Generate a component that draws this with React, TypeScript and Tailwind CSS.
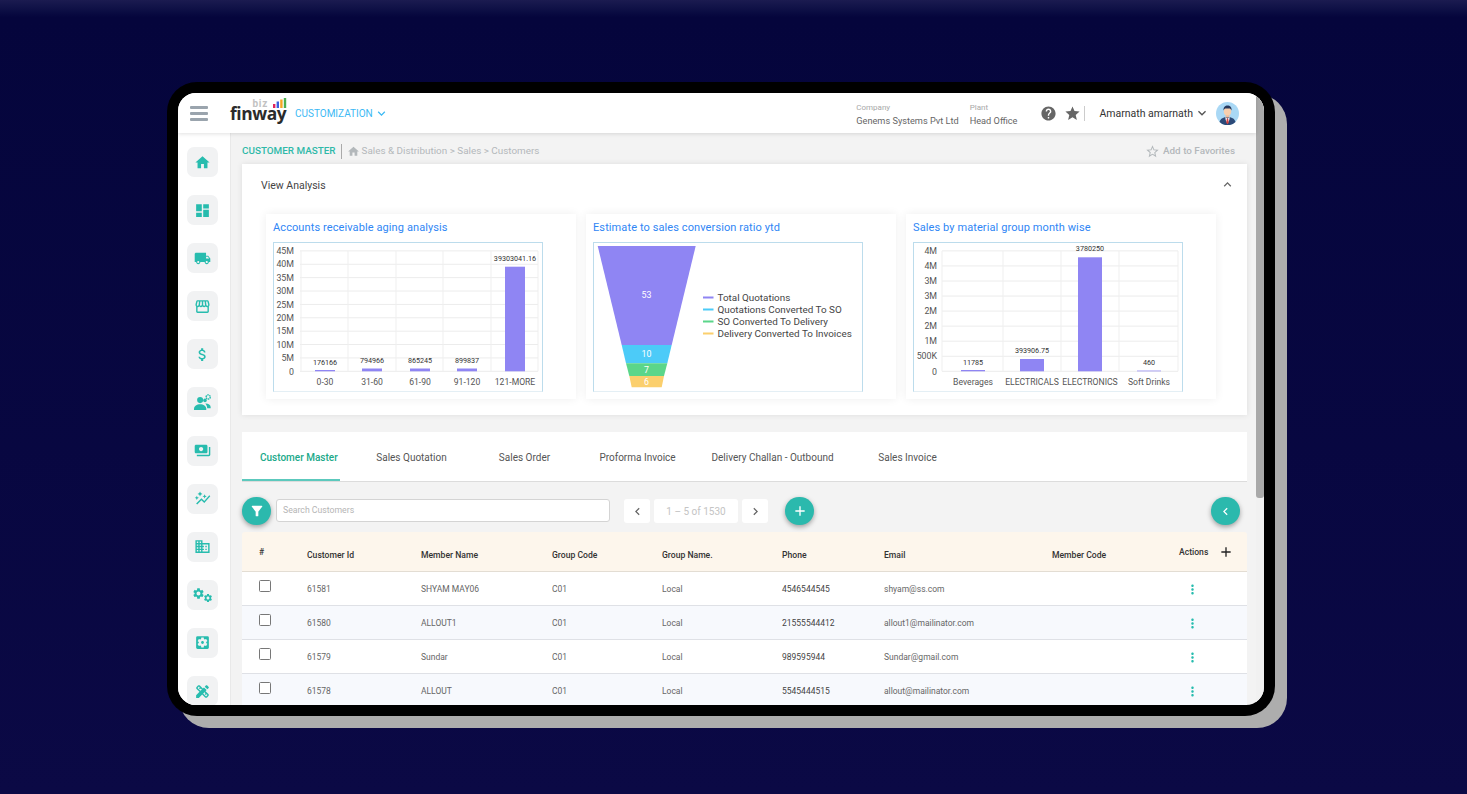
import type { ReactNode } from "react";
import {
  MdHome,
  MdDashboard,
  MdLocalShipping,
  MdStorefront,
  MdAttachMoney,
  MdPayments,
  MdAutoGraph,
  MdDomain,
  MdSettings,
  MdSettingsApplications,
  MdDesignServices,
  MdHelp,
  MdStar,
  MdStarBorder,
  MdKeyboardArrowDown,
  MdKeyboardArrowUp,
  MdChevronLeft,
  MdChevronRight,
  MdFilterAlt,
  MdAdd,
  MdMoreVert,
} from "react-icons/md";

function PeopleGearIcon() {
  return (
    <svg width="19" height="18" viewBox="0 0 20 19" fill="currentColor" className="block">
      <circle cx="7.5" cy="7.5" r="3.2" />
      <path d="M1 17c0-3.2 3-5 6.5-5s6.5 1.8 6.5 5v1H1z" />
      <circle cx="12.6" cy="7.8" r="1.9" />
      <path d="M13 11.2c2.8-.2 5.6 1.2 5.6 3.6V16H15c-.2-1.9-1-3.6-2-4.8z" />
      <circle cx="16" cy="4.2" r="2.2" fill="none" stroke="currentColor" strokeWidth="1.5" strokeDasharray="1.5 0.6" />
    </svg>
  );
}

function GearsIcon() {
  return (
    <div className="flex">
      <MdSettings className="text-[13px]" />
      <MdSettings className="mt-[6px] -ml-[2px] text-[10px]" />
    </div>
  );
}

const iconClass = "text-[17px]";

const NAV_ITEMS: ReactNode[] = [
  <MdHome className={iconClass} />,
  <MdDashboard className={iconClass} />,
  <MdLocalShipping className={iconClass} />,
  <MdStorefront className={iconClass} />,
  <MdAttachMoney className={iconClass} />,
  <PeopleGearIcon />,
  <MdPayments className={iconClass} />,
  <MdAutoGraph className={iconClass} />,
  <MdDomain className={iconClass} />,
  <GearsIcon />,
  <MdSettingsApplications className={iconClass} />,
  <MdDesignServices className={iconClass} />,
];

const TABLE_COLS =
  "grid grid-cols-[65px_114px_131px_110px_120px_102px_168px_127px_1fr] items-center";

const ROWS = [
  { id: "61581", name: "SHYAM MAY06", phone: "4546544545", email: "shyam@ss.com" },
  { id: "61580", name: "ALLOUT1", phone: "21555544412", email: "allout1@mailinator.com" },
  { id: "61579", name: "Sundar", phone: "989595944", email: "Sundar@gmail.com" },
  { id: "61578", name: "ALLOUT", phone: "5545444515", email: "allout@mailinator.com" },
];

type Bar = { x: number; w: number; top: number; value: string; labelY: number; name: string };

function ChartBox({ x, children }: { x: number; children: ReactNode }) {
  return (
    <div className="h-[150px] w-[270px] border border-[#bcdcec] border-b-[#e4eff5]">
      <svg
        width={268}
        height={148}
        viewBox={`${x + 1} 243 268 148`}
        className="block font-[Roboto,sans-serif]"
      >
        {children}
      </svg>
    </div>
  );
}

function BarChart(props: {
  boxX: number;
  labelX: number;
  gridL: number;
  gridR: number;
  ticks: string[];
  vLines: number[];
  bars: Bar[];
}) {
  const { boxX, labelX, gridL, gridR, ticks, vLines, bars } = props;
  const y0 = 371.3;
  const yTop = 250.9;
  const step = (y0 - yTop) / (ticks.length - 1);
  return (
    <ChartBox x={boxX}>
      {ticks.map((t, i) => {
        const y = yTop + step * i;
        return (
          <g key={i}>
            <line x1={gridL} x2={gridR} y1={y} y2={y} stroke="#ececec" strokeWidth={1} />
            <text x={labelX} y={y + 3.2} textAnchor="end" fontSize={8.8} fill="#555">
              {t}
            </text>
          </g>
        );
      })}
      {vLines.map((x) => (
        <line key={x} x1={x} x2={x} y1={yTop} y2={y0} stroke="#efefef" strokeWidth={1} />
      ))}
      {bars.map((b) => (
        <g key={b.name}>
          <rect x={b.x} y={b.top} width={b.w} height={y0 - b.top} fill="#8f85f3" />
          <text x={b.x + b.w / 2} y={b.labelY} textAnchor="middle" fontSize={7.2} fill="#333">
            {b.value}
          </text>
          <text x={b.x + b.w / 2} y={385} textAnchor="middle" fontSize={8.6} fill="#555">
            {b.name}
          </text>
        </g>
      ))}
    </ChartBox>
  );
}

function FunnelChart() {
  const slices = [
    { pts: "597.7,246 695.7,246 671.7,345 621.7,345", fill: "#8f85f3", label: "53", y: 298 },
    { pts: "621.7,345 671.7,345 667.3,363.3 626,363.3", fill: "#4ccbf8", label: "10", y: 357 },
    { pts: "626,363.3 667.3,363.3 664,376 629.3,376", fill: "#5bd68a", label: "7", y: 373 },
    { pts: "629.3,376 664,376 661.7,387.3 631.7,387.3", fill: "#fbcf6d", label: "6", y: 385 },
  ];
  const legend = [
    { text: "Total Quotations", color: "#8f85f3" },
    { text: "Quotations Converted To SO", color: "#4ccbf8" },
    { text: "SO Converted To Delivery", color: "#5bd68a" },
    { text: "Delivery Converted To Invoices", color: "#fbcf6d" },
  ];
  return (
    <ChartBox x={593}>
      {slices.map((s) => (
        <g key={s.label}>
          <polygon points={s.pts} fill={s.fill} />
          <text x={646.5} y={s.y} textAnchor="middle" fontSize={8.8} fill="#fff">
            {s.label}
          </text>
        </g>
      ))}
      {legend.map((l, i) => (
        <g key={l.text}>
          <rect x={703} y={296.5 + i * 12} width={10.5} height={2} fill={l.color} />
          <text x={717.5} y={301 + i * 12} fontSize={9.9} fill="#444">
            {l.text}
          </text>
        </g>
      ))}
    </ChartBox>
  );
}

function ChartCard({ title, children }: { title: string; children: ReactNode }) {
  return (
    <div className="h-[185px] w-[310px] bg-white pl-[7px] shadow-[0_0_9px_rgba(0,0,0,0.07)]">
      <div className="flex h-[28px] items-center text-[11px] tracking-[0.1px] text-[#2f86f5]">
        {title}
      </div>
      {children}
    </div>
  );
}

function Avatar() {
  return (
    <svg width="23" height="23" viewBox="0 0 23 23" className="block">
      <circle cx="11.5" cy="11.5" r="11.5" fill="#a9d8f5" />
      <path d="M3.5 20c1-3.6 4-5 8-5s7 1.4 8 5a11.5 11.5 0 0 1-16 0z" fill="#2c4a78" />
      <path d="M9.3 15l2.2 1.8 2.2-1.8-.4 3-1.8 3.5-1.8-3.5z" fill="#fff" />
      <path d="M10.8 16.6h1.4l.5 4.2-1.2 1.4-1.2-1.4z" fill="#d8423f" />
      <rect x="9.7" y="11.5" width="3.6" height="4" fill="#eebb99" />
      <ellipse cx="11.5" cy="9.2" rx="3.7" ry="4.4" fill="#f7cfae" />
      <path d="M7.6 8.6c-.5-3.4 1.6-5 4-5s4.4 1.5 3.9 5c-.5-1.6-1.2-2.2-2.4-2.2H10c-1.2 0-2 .6-2.4 2.2z" fill="#26385c" />
    </svg>
  );
}

function Logo() {
  return (
    <div className="mb-[9px] flex w-[57px] flex-col">
      <div className="flex h-[10px] items-end justify-end">
        <span className="mr-[5px] font-[Roboto,sans-serif] text-[10px] leading-[9px] font-bold tracking-[0.7px] text-[#c2c2c2]">
          biz
        </span>
        <svg width="14" height="10" viewBox="0 0 14 10" className="block">
          <rect x="0" y="6" width="2.4" height="4" fill="#e0245e" />
          <rect x="3.6" y="3.5" width="2.4" height="6.5" fill="#3b5fe0" />
          <rect x="7.2" y="1.5" width="2.4" height="8.5" fill="#f5a623" />
          <rect x="10.8" y="0" width="2.4" height="10" fill="#4caf50" />
        </svg>
      </div>
      <span className="font-['Open_Sans',sans-serif] text-[17.4px] leading-[11px] font-bold tracking-[-0.4px] text-[#2b2b2b]">
        finway
      </span>
    </div>
  );
}

function Header() {
  return (
    <div className="z-10 flex h-[40px] shrink-0 items-center bg-white shadow-[0_1px_4px_rgba(0,0,0,0.12)]">
      <div className="ml-[12px] flex w-[18px] flex-col gap-[3px]">
        <span className="h-[3px] rounded-[1px] bg-[#9aa4ad]" />
        <span className="h-[3px] rounded-[1px] bg-[#9aa4ad]" />
        <span className="h-[3px] rounded-[1px] bg-[#9aa4ad]" />
      </div>
      <div className="ml-[22px]">
        <Logo />
      </div>
      <div className="ml-[8px] flex items-center pt-[1px] text-[10px] text-[#3cb9f4]">
        CUSTOMIZATION
        <MdKeyboardArrowDown className="ml-[1px] text-[15px]" />
      </div>
      <div className="mt-[3px] ml-auto flex flex-col gap-[2px] text-[9.2px] leading-[12px] text-[#666]">
        <span className="text-[8px] leading-[10px] text-[#a8a8a8]">Company</span>
        <span>Genems Systems Pvt Ltd</span>
      </div>
      <div className="mt-[3px] ml-[11px] flex flex-col gap-[2px] text-[9.2px] leading-[12px] text-[#666]">
        <span className="text-[8px] leading-[10px] text-[#a8a8a8]">Plant</span>
        <span>Head Office</span>
      </div>
      <MdHelp className="ml-[23px] text-[17px] text-[#666]" />
      <MdStar className="ml-[7px] text-[17px] text-[#666]" />
      <span className="ml-[3px] h-[15px] w-px bg-[#ccc]" />
      <span className="ml-[14px] pt-[1px] text-[10.5px] text-[#333]">Amarnath amarnath</span>
      <MdKeyboardArrowDown className="ml-px text-[16px] text-[#555]" />
      <div className="mr-[17px] ml-[6px]">
        <Avatar />
      </div>
    </div>
  );
}

function Sidebar() {
  return (
    <div className="flex w-[53px] shrink-0 flex-col items-start gap-[18.1px] border-r border-[#e9e9e9] bg-white pt-[14px] pl-[9px]">
      {NAV_ITEMS.map((icon, i) => (
        <div
          key={i}
          className="flex h-[30px] w-[31px] shrink-0 items-center justify-center rounded-[7px] bg-[#f1f2f3] text-[#27bcae]"
        >
          {icon}
        </div>
      ))}
    </div>
  );
}

function AnalysisCard() {
  return (
    <div className="h-[251px] bg-white pl-[24px] shadow-[0_0_6px_rgba(0,0,0,0.09)]">
      <div className="-ml-[5px] flex h-[50px] items-center justify-between pr-[12px] pb-[6px] text-[10.5px] text-[#444]">
        View Analysis
        <MdKeyboardArrowUp className="mb-[3px] text-[15px] text-[#666]" />
      </div>
      <div className="flex gap-[10px]">
        <ChartCard title="Accounts receivable aging analysis">
          <BarChart
            boxX={273}
            labelX={294}
            gridL={300}
            gridR={538}
            ticks={["45M", "40M", "35M", "30M", "25M", "20M", "15M", "10M", "5M", "0"]}
            vLines={[301, 348, 396, 443, 491, 538]}
            bars={[
              { x: 315, w: 20, top: 370, value: "176166", labelY: 364.5, name: "0-30" },
              { x: 362, w: 20, top: 368.5, value: "794966", labelY: 362.5, name: "31-60" },
              { x: 410, w: 20, top: 368.5, value: "865245", labelY: 362.5, name: "61-90" },
              { x: 457, w: 20, top: 368.5, value: "899837", labelY: 362.5, name: "91-120" },
              { x: 505, w: 20, top: 266.7, value: "39303041.16", labelY: 260.5, name: "121-MORE" },
            ]}
          />
        </ChartCard>
        <ChartCard title="Estimate to sales conversion ratio ytd">
          <FunnelChart />
        </ChartCard>
        <ChartCard title="Sales by material group month wise">
          <BarChart
            boxX={913}
            labelX={937}
            gridL={942}
            gridR={1178}
            ticks={["4M", "4M", "3M", "3M", "2M", "2M", "1M", "500K", "0"]}
            vLines={[942, 1003, 1061, 1119, 1178]}
            bars={[
              { x: 961, w: 24, top: 370, value: "11785", labelY: 364.5, name: "Beverages" },
              { x: 1020, w: 24, top: 359, value: "393906.75", labelY: 353, name: "ELECTRICALS" },
              { x: 1078, w: 24, top: 257.3, value: "3780250", labelY: 251, name: "ELECTRONICS" },
              { x: 1137, w: 24, top: 370.6, value: "460", labelY: 365, name: "Soft Drinks" },
            ]}
          />
        </ChartCard>
      </div>
    </div>
  );
}

function Tabs() {
  return (
    <div className="mt-[17px] flex h-[50px] border-b border-[#dcdcdc] bg-white pt-[2px] text-[10px] text-[#555]">
      <div className="mr-[15px] flex w-[98px] items-center border-b-2 border-[#5cc9bd] pt-[2px] pl-[18px] font-medium whitespace-nowrap text-[#20a98a]">
        Customer Master
      </div>
      <div className="flex w-[113px] items-center justify-center">Sales Quotation</div>
      <div className="flex w-[113px] items-center justify-center">Sales Order</div>
      <div className="flex w-[113px] items-center justify-center">Proforma Invoice</div>
      <div className="flex w-[157px] items-center justify-center">Delivery Challan - Outbound</div>
      <div className="flex w-[113px] items-center justify-center">Sales Invoice</div>
    </div>
  );
}

function RoundButton({ children }: { children: ReactNode }) {
  return (
    <div className="flex h-[28px] w-[29px] shrink-0 items-center justify-center rounded-full bg-[#2bb9ad] text-white shadow-[0_2px_5px_rgba(0,0,0,0.35)]">
      {children}
    </div>
  );
}

function Toolbar() {
  return (
    <div className="mt-[15px] flex h-[28px] items-center">
      <RoundButton>
        <MdFilterAlt className="text-[16px]" />
      </RoundButton>
      <div className="mb-[1px] ml-[5px] flex h-[23px] w-[334px] items-center rounded-[3px] border border-[#d4d4d4] bg-white pl-[6px] text-[8.7px] text-[#b5b5b5]">
        Search Customers
      </div>
      <div className="ml-[14px] flex h-[24px] gap-[4px] text-[#666]">
        <div className="flex w-[26px] items-center justify-center rounded-[3px] bg-white">
          <MdChevronLeft className="text-[15px]" />
        </div>
        <div className="flex w-[84px] items-center justify-center rounded-[3px] bg-white text-[10px] text-[#c4c4c4]">
          1 – 5 of 1530
        </div>
        <div className="flex w-[26px] items-center justify-center rounded-[3px] bg-white">
          <MdChevronRight className="text-[15px]" />
        </div>
      </div>
      <div className="ml-[17px]">
        <RoundButton>
          <MdAdd className="text-[16px]" />
        </RoundButton>
      </div>
      <div className="mr-[7px] ml-auto">
        <RoundButton>
          <MdChevronLeft className="text-[15px]" />
        </RoundButton>
      </div>
    </div>
  );
}

function CustomerTable() {
  return (
    <div className="mt-[7px] text-[8.5px]">
      <div className={`${TABLE_COLS} h-[40px] rounded-t-[3px] border-b border-[#e3ddd3] bg-[#fdf6ec] pt-[8px] text-[8.6px] font-medium text-[#333]`}>
        <span className="-mt-[6px] pl-[17px]">#</span>
        <span>Customer Id</span>
        <span>Member Name</span>
        <span>Group Code</span>
        <span>Group Name.</span>
        <span>Phone</span>
        <span>Email</span>
        <span>Member Code</span>
        <span className="-mt-[7px] flex items-center">
          Actions
          <MdAdd className="ml-[10px] text-[16px] text-[#222]" />
        </span>
      </div>
      {ROWS.map((r, i) => (
        <div
          key={r.id}
          className={`${TABLE_COLS} h-[34px] border-b border-[#dfe1e6] pt-[2px] text-[#666] ${
            i % 2 === 0 ? "bg-white" : "bg-[#f7f9fd]"
          }`}
        >
          <span className="-mt-[8px] pl-[17px]">
            <span className="block h-[12px] w-[12px] rounded-[1.5px] border border-[#777] bg-white" />
          </span>
          <span>{r.id}</span>
          <span>{r.name}</span>
          <span>C01</span>
          <span>Local</span>
          <span className="text-[#444]">{r.phone}</span>
          <span>{r.email}</span>
          <span />
          <span className="pl-[6px]">
            <MdMoreVert className="text-[15px] text-[#27bcae]" />
          </span>
        </div>
      ))}
    </div>
  );
}

export default function App() {
  return (
    <div className="h-[794px] w-full overflow-hidden bg-gradient-to-b from-[#1b1b50] from-0% via-[#05053c] via-[2.2%] to-[#0b0945] pt-[82px] pl-[167px] font-[Roboto,sans-serif]">
      <div className="h-[634px] w-[1108px] rounded-[30px] bg-black p-[11px] shadow-[12px_12px_0_#adadad]">
        <div className="flex h-[612px] overflow-hidden rounded-[18px] bg-[#f3f3f3]">
          <div className="flex min-w-0 flex-1 flex-col">
            <Header />
            <div className="flex min-h-0 flex-1">
              <Sidebar />
              <div className="min-w-0 flex-1 pr-[9px] pl-[11px]">
                <div className="flex h-[31px] items-center pt-[6px] text-[9.9px] text-[#b3b8bb]">
                  <span className="text-[9.9px] font-medium text-[#2fb9a9]">CUSTOMER MASTER</span>
                  <span className="mx-[5px] h-[15px] w-px bg-[#aaa]" />
                  <MdHome className="mr-[2px] text-[13px] text-[#b3b8bb]" />
                  Sales &amp; Distribution &gt; Sales &gt; Customers
                  <MdStarBorder className="mr-[3px] ml-auto text-[15px]" />
                  <span className="mr-[12px] font-medium">Add to Favorites</span>
                </div>
                <AnalysisCard />
                <Tabs />
                <Toolbar />
                <CustomerTable />
              </div>
            </div>
          </div>
          <div className="w-[8px] shrink-0 bg-[#f1f1f1]">
            <div className="h-[405px] rounded-b-[3px] bg-[#a9a9a9]" />
          </div>
        </div>
      </div>
    </div>
  );
}
